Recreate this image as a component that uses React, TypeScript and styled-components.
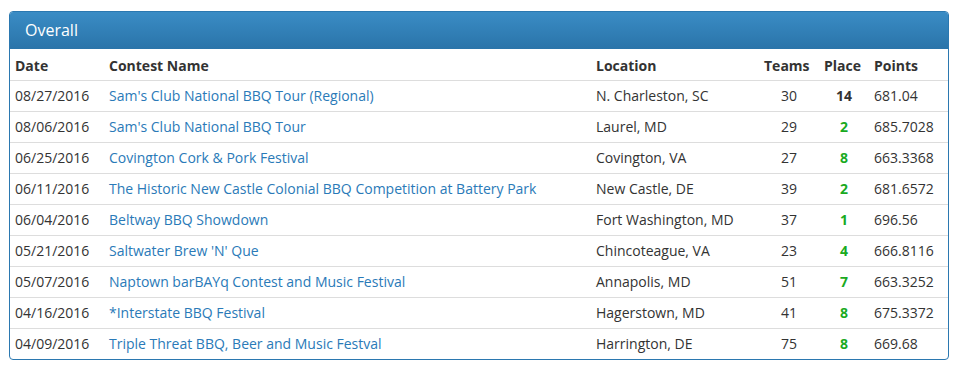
import React from "react";
import styled, { createGlobalStyle } from "styled-components";

const Global = createGlobalStyle`
  html, body { margin: 0; padding: 0; background: #fff; }
  body { font-family: "Open Sans", "Liberation Sans", sans-serif; font-size: 14px; color: #333; }
  * { box-sizing: border-box; }
`;

const Page = styled.div`
  padding: 11px 9px 0 9px;
`;

const Panel = styled.section`
  width: 940px;
  border: 1px solid #2b78b0;
  border-radius: 4px;
  overflow: hidden;
`;

const PanelHeading = styled.div`
  height: 37px;
  padding: 0 15px 2px 15px;
  display: flex;
  align-items: center;
  color: #fff;
  font-size: 16px;
  background: linear-gradient(to bottom, #3a8cc5 0%, #2a74a9 100%);
`;

const Table = styled.table`
  width: 100%;
  border-collapse: collapse;
  table-layout: fixed;
`;

const Th = styled.th<{ $w?: number }>`
  ${(p) => (p.$w ? `width: ${p.$w}px;` : "")}
  text-align: left;
  font-weight: 700;
  padding: 7px 5px 3px 5px;
  line-height: 20px;
  height: 31px;
  border-bottom: 1px solid #ddd;
  color: #333;
`;

const Td = styled.td<{ $center?: boolean }>`
  text-align: ${(p) => (p.$center ? "center" : "left")};
  padding: 5px;
  line-height: 20px;
  height: 31px;
  border-top: 1px solid #ddd;
  white-space: nowrap;
`;

const Row = styled.tr`
  &:first-child td { border-top: none; }
`;

const Link = styled.a`
  color: #2a7ab8;
  text-decoration: none;
`;

const Place = styled.span<{ $top: boolean }>`
  font-weight: 700;
  color: ${(p) => (p.$top ? "#1aaa1f" : "#333")};
`;

const rows = [
  ["08/27/2016", "Sam's Club National BBQ Tour (Regional)", "N. Charleston, SC", "30", "14", "681.04"],
  ["08/06/2016", "Sam's Club National BBQ Tour", "Laurel, MD", "29", "2", "685.7028"],
  ["06/25/2016", "Covington Cork & Pork Festival", "Covington, VA", "27", "8", "663.3368"],
  ["06/11/2016", "The Historic New Castle Colonial BBQ Competition at Battery Park", "New Castle, DE", "39", "2", "681.6572"],
  ["06/04/2016", "Beltway BBQ Showdown", "Fort Washington, MD", "37", "1", "696.56"],
  ["05/21/2016", "Saltwater Brew 'N' Que", "Chincoteague, VA", "23", "4", "666.8116"],
  ["05/07/2016", "Naptown barBAYq Contest and Music Festival", "Annapolis, MD", "51", "7", "663.3252"],
  ["04/16/2016", "*Interstate BBQ Festival", "Hagerstown, MD", "41", "8", "675.3372"],
  ["04/09/2016", "Triple Threat BBQ, Beer and Music Festval", "Harrington, DE", "75", "8", "669.68"],
];

export default function App() {
  return (
    <Page>
      <Global />
      <Panel>
        <PanelHeading>Overall</PanelHeading>
        <Table>
          <thead>
            <tr>
              <Th $w={94}>Date</Th>
              <Th $w={487}>Contest Name</Th>
              <Th $w={168}>Location</Th>
              <Th $w={60}>Teams</Th>
              <Th $w={50}>Place</Th>
              <Th>Points</Th>
            </tr>
          </thead>
          <tbody>
            {rows.map((r) => (
              <Row key={r[0]}>
                <Td>{r[0]}</Td>
                <Td>
                  <Link href="#">{r[1]}</Link>
                </Td>
                <Td>{r[2]}</Td>
                <Td $center>{r[3]}</Td>
                <Td $center>
                  <Place $top={Number(r[4]) <= 10}>{r[4]}</Place>
                </Td>
                <Td>{r[5]}</Td>
              </Row>
            ))}
          </tbody>
        </Table>
      </Panel>
    </Page>
  );
}
